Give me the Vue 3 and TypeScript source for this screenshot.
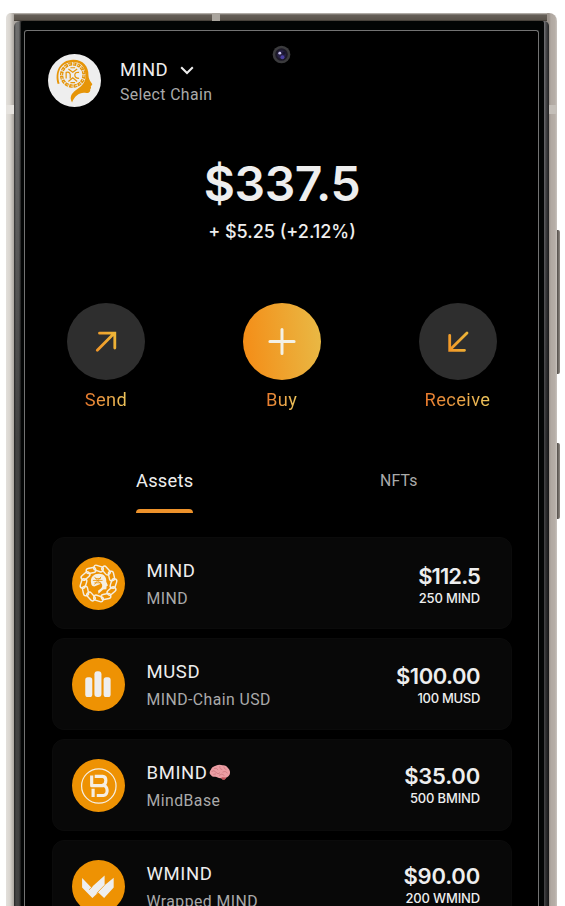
<script setup lang="ts">
interface Asset {
  icon: 'links' | 'bars' | 'base' | 'wrapped'
  symbol: string
  name: string
  value: string
  amount: string
  brain?: boolean
}

const assets: Asset[] = [
  { icon: 'links', symbol: 'MIND', name: 'MIND', value: '$112.5', amount: '250 MIND' },
  { icon: 'bars', symbol: 'MUSD', name: 'MIND-Chain USD', value: '$100.00', amount: '100 MUSD' },
  { icon: 'base', symbol: 'BMIND', name: 'MindBase', value: '$35.00', amount: '500 BMIND', brain: true },
  { icon: 'wrapped', symbol: 'WMIND', name: 'Wrapped MIND', value: '$90.00', amount: '200 WMIND' },
]

const links: number[] = Array.from({ length: 12 }, (_, i) => i * 30)
</script>

<template>
  <div class="stage">
    <div class="phone">
      <i class="antenna antenna-top"></i>
      <i class="antenna antenna-left"></i>
      <i class="antenna antenna-right"></i>
      <i class="key key-volume"></i>
      <i class="key key-power"></i>
      <div class="rail">
        <div class="bezel">
          <main class="screen">
            <svg class="camera" viewBox="0 0 20 20">
              <circle cx="10" cy="10" r="9.3" fill="#3b3b3d" />
              <circle cx="10" cy="10" r="6.6" fill="#1c1927" />
              <circle cx="10" cy="10" r="4.6" fill="#272145" />
              <circle cx="12.5" cy="8.5" r="1.7" fill="#17132e" />
              <circle cx="11" cy="13" r="2.1" fill="#4a3fa0" />
              <circle cx="8.2" cy="8.6" r="1.5" fill="#c9c3ee" />
            </svg>

            <header class="account">
              <svg class="avatar" viewBox="0 0 52 52">
                <circle cx="26" cy="26" r="26" fill="#eee" />
                <path d="M9.5 29.5C6 18 11.5 6 24.5 5.7C34 5.4 40 12 39.7 21C39.7 24 41.5 27 43.4 29.4C43.7 30.2 42.5 31 42 31.4L42.3 33.4L41.4 34.5C41.8 38.5 38.5 38.4 35.3 38.1C29.8 38.2 26 42 23.6 47.5C20.7 42.5 23 38.6 27.5 35.3C34.2 31.2 37.4 27.3 36.7 19.7C36 11 30.4 7.3 23.7 8C12.2 8.3 8.1 18 11.4 29Z" fill="#e69508" />
                <circle cx="24.3" cy="20.6" r="11" fill="none" stroke="#e69508" stroke-width="3.2" stroke-dasharray="3.5 .8" />
                <circle cx="24.3" cy="20.6" r="11" fill="none" stroke="#eee" stroke-width=".8" stroke-dasharray="2 2.3" />
                <g fill="none" stroke="#e69508" stroke-width="1.2">
                  <path d="M17.8 24V18Q21 17 21.8 20V24M30.5 18Q26.3 17.5 26.3 20.7T30.5 24M20 14.7L24.3 18L28.6 14.7M20 27L24.3 23.4L28.6 27M22 13.5H26.6M22 28H26.6" />
                </g>
              </svg>
              <div class="chain">
                <div class="chain-name">
                  <span>MIND</span>
                  <svg class="chevron" viewBox="0 0 14 9"><path d="M1.2 1.3L7 7L12.8 1.3" fill="none" stroke="#eee" stroke-width="2" /></svg>
                </div>
                <div class="chain-hint">Select Chain</div>
              </div>
            </header>

            <section class="balance">
              <div class="total">$337.5</div>
              <div class="change">+ $5.25 (+2.12%)</div>
            </section>

            <nav class="actions">
              <div class="action">
                <svg class="action-icon" viewBox="0 0 78 77">
                  <defs><linearGradient id="stroke-fill" gradientUnits="userSpaceOnUse" x1="28" y1="40" x2="50" y2="34"><stop stop-color="#f29727" /><stop offset="1" stop-color="#edb638" /></linearGradient></defs>
                  <ellipse cx="39" cy="38.5" rx="39" ry="38.5" fill="#2e2e2e" />
                  <path d="M30.3 47.2L47.2 30.3M32.5 30.2H47.8V45" fill="none" stroke="url(#stroke-fill)" stroke-width="2.8" stroke-linecap="round" />
                </svg>
                <span class="action-label">Send</span>
              </div>
              <div class="action">
                <svg class="action-icon" viewBox="0 0 78 77">
                  <defs><linearGradient id="buy-fill" x1="0" y1=".55" x2="1" y2=".45"><stop stop-color="#f48d17" /><stop offset="1" stop-color="#e9b844" /></linearGradient></defs>
                  <ellipse cx="39" cy="38.5" rx="39" ry="38.5" fill="url(#buy-fill)" />
                  <path d="M39 26.4V50.6M26.9 38.5H51.1" stroke="#f3f1e6" stroke-width="3" stroke-linecap="round" />
                </svg>
                <span class="action-label">Buy</span>
              </div>
              <div class="action">
                <svg class="action-icon" viewBox="0 0 78 77">
                  <ellipse cx="39" cy="38.5" rx="39" ry="38.5" fill="#2e2e2e" />
                  <path d="M48 29.9L31 46.8M30.7 32.5V47.3H45.5" fill="none" stroke="url(#stroke-fill)" stroke-width="2.8" stroke-linecap="round" />
                </svg>
                <span class="action-label">Receive</span>
              </div>
            </nav>

            <div class="tabs">
              <div class="tab active">Assets</div>
              <div class="tab">NFTs</div>
            </div>

            <section class="assets">
              <article v-for="asset in assets" :key="asset.symbol" class="card" :class="`card-${asset.icon}`">
                <svg class="token" viewBox="0 0 52 52">
                  <circle cx="26" cy="26" r="26" fill="#ee9203" />
                  <g v-if="asset.icon === 'links'">
                    <g fill="none" stroke="#f5efe2" stroke-width="1.4">
                      <rect v-for="angle in links" :key="angle" x="21.3" y="8.8" width="9.4" height="5" rx="2.2" :transform="`rotate(${angle} 26 26) rotate(18 26 11.3)`" />
                    </g>
                    <path d="M18.8 26C17.5 19.5 21.5 16.3 26.5 16.4C31.4 16.5 34 19.5 33.6 24.3L35.3 28L34 28.7L33.7 31.7L30.6 32L26 36L25.5 33C29.2 31 30.5 29 29 26L22.5 28.8C20.5 29 19 28 18.8 26Z" fill="#f5efe2" />
                    <path d="M20.5 23H30M22 19.5L29 27M28.5 19.5L22 27M22.8 21.2H28.3M22 25.3H28.5" stroke="#ee9203" stroke-width=".8" />
                  </g>
                  <g v-else-if="asset.icon === 'bars'" fill="#eee">
                    <rect x="13" y="19" width="6.9" height="19.3" rx="2.5" />
                    <rect x="22" y="13" width="6.9" height="25.3" rx="2.9" />
                    <rect x="31" y="19" width="6.9" height="19.3" rx="2.5" />
                  </g>
                  <g v-else-if="asset.icon === 'base'" fill="none" stroke="#f5eee2">
                    <circle cx="26.3" cy="26.5" r="16.9" stroke-width="1.2" />
                    <path d="M19.3 16.2V26.2H31M22.3 17H30.1C34.2 17.3 34.3 24.7 30 25.8C35.5 26 36 35 31 35.8H24.3M20.7 29.3V37.3" stroke-width="3.1" stroke-linejoin="round" />
                  </g>
                  <g v-else>
                    <path fill="#eee" d="M9.9 17.7L18.9 27L32 15.3V24.7L40.9 17.4V27L31.5 37.2L25.8 31.8L20 37.2L9.9 27Z" />
                    <path d="M16.8 29.2L20.2 26M32 24.7L24.2 32.7" stroke="#ee9203" stroke-width=".7" />
                  </g>
                </svg>
                <div class="identity">
                  <div class="symbol">
                    <span>{{ asset.symbol }}</span>
                    <svg v-if="asset.brain" class="brain" viewBox="0 0 22 17">
                      <path d="M2 11C0 10 .5 7 2 5.5C3 2.5 6 2.5 7.2 1.6C9 .5 12 .7 13.4 1.3C16 1 18 2.3 19 4C21 5.5 21.6 8.8 20.6 10.7C19.5 13 17.5 13 16.8 14C16 16 13 16 12.4 14.2C9.5 14.7 8 12.7 6 12.8C4 12.8 2.7 12.5 2 11Z" fill="#ec9ea4" />
                      <path d="M12.6 13.2L17.2 13.4C16.5 16 13.4 16.5 12.6 14.3Z" fill="#c0535a" />
                      <path d="M2.6 7.5Q5 5.5 7 8.3T11 8.7M5 4.5Q8 3.2 9 6.2M11 2Q10 5 13.3 5.6M14.8 2.6Q14.8 5 17.5 5.7M13.5 8.2Q17 6.4 18.4 9.4M10 11.4Q13 8.7 15.4 11.5M4.3 10.4L7 9.9" fill="none" stroke="#c8727a" stroke-width=".7" />
                    </svg>
                  </div>
                  <div class="name">{{ asset.name }}</div>
                </div>
                <div class="worth">
                  <div class="value">{{ asset.value }}</div>
                  <div class="amount">{{ asset.amount }}</div>
                </div>
              </article>
            </section>
          </main>
        </div>
      </div>
    </div>
  </div>
</template>

<style>
body { margin: 0; background: #fff; }
</style>

<style scoped>
* { box-sizing: border-box; }
svg { display: block; flex: none; }
.stage { width: 565px; height: 906px; padding: 13px 8px 0 6px; overflow: hidden; background: #fff; font-family: Roboto, sans-serif; }
.phone { position: relative; height: 893px; padding: 8px 8px 0; border-radius: 5px 8px 0 0; background: linear-gradient(#c9c5c0, #655f58 2px, #5a534b 7px, #37322d 8px) 8px 0 / 533px 8px no-repeat, linear-gradient(90deg, #e3e0dc 0, #d8d4ce 4px, #aaa59f 8px, #9c948d 543px, #b0a8a1 545px, #b6aea7 549px, #c8c3be 551px); }
.antenna { position: absolute; background: #aaa59e; }
.antenna-top { left: 206px; top: 0; width: 8px; height: 8px; }
.antenna-left { left: 0; top: 92px; width: 8px; height: 9px; background: #e6e3df; }
.antenna-right { right: 0; top: 92px; width: 8px; height: 9px; background: #c4bfb9; }
.key { position: absolute; left: 551px; width: 3px; border-radius: 0 2px 2px 0; background: linear-gradient(90deg, #504b46, #918b85); }
.key-volume { top: 217px; height: 144px; }
.key-power { top: 430px; height: 76px; }
.rail { height: 885px; padding: 0 5px 0 7px; border-radius: 6px 5px 0 0; background: linear-gradient(rgba(0, 0, 0, 0), rgba(0, 0, 0, .1) 130px, rgba(0, 0, 0, .4) 420px), linear-gradient(90deg, #3b3b3b 0, #727272 2px, #6c6c6c 5px, #222 7px, #171717 528px, #77777a 530px, #4b4b4e 532px, #242424 535px); }
.bezel { height: 885px; padding: 9px 5px 0 3px; border-radius: 2px 2px 0 0; background: #030505; }
.screen { position: relative; height: 876px; padding: 23px 26px 0 27px; border: solid #737373; border-width: 1px 1px 0; border-radius: 3px 3px 0 0; background: #000; overflow: hidden; }
.camera { position: absolute; left: 247px; top: 14px; width: 19px; height: 19px; }
.account { display: flex; margin-left: -4.5px; height: 53px; }
.avatar { width: 53px; height: 53px; }
.chain { margin-left: 19.5px; padding-top: 5px; }
.chain-name { display: flex; align-items: center; height: 22px; color: #eee; font-size: 18.5px; letter-spacing: .35px; line-height: 22px; }
.chevron { width: 14px; height: 9px; margin-left: 12px; }
.chain-hint { margin-top: 4px; height: 19px; color: #aaa; font-size: 15.8px; letter-spacing: .4px; line-height: 19px; white-space: nowrap; }
.balance { height: 196px; padding-top: 47px; color: #eee; font-family: Inter, sans-serif; text-align: center; }
.total { height: 60px; font-size: 48px; font-weight: 600; letter-spacing: -.4px; line-height: 60px; }
.change { height: 24px; margin-top: 6px; font-size: 18px; font-weight: 500; letter-spacing: 0; line-height: 24px; }
.actions { display: flex; justify-content: space-between; height: 147px; padding: 0 15.5px 0 15px; }
.action { display: flex; flex-direction: column; align-items: center; width: 78px; }
.action-icon { width: 78px; height: 77px; }
.action-label { height: 22px; margin-top: 9px; background: linear-gradient(90deg, #e8792d, #edc65c); -webkit-background-clip: text; background-clip: text; color: transparent; font-size: 18.3px; letter-spacing: .4px; line-height: 22px; }
.tabs { display: flex; height: 87px; padding-top: 17px; }
.tab { height: 46px; margin-left: 187px; color: #aaa; font-size: 15.8px; letter-spacing: .2px; line-height: 27px; }
.active { display: flex; flex-direction: column; justify-content: space-between; width: 57px; margin-left: 84px; color: #eee; font-size: 18.3px; letter-spacing: .25px; }
.active::after { content: ""; height: 4px; border-radius: 4px 4px 0 0; background: #ed922b; }
.assets { display: flex; flex-direction: column; gap: 9px; }
.card { display: flex; align-items: center; flex: none; height: 92px; padding: 0 31px 0 20px; border: 1px solid #0b0b0b; border-radius: 12px; background: #080808; }
.token { width: 53px; height: 53px; margin-left: -1px; }
.identity { margin-left: 21.5px; padding-top: 1px; }
.symbol { display: flex; align-items: center; height: 24px; color: #eee; font-size: 18.5px; letter-spacing: .6px; line-height: 24px; }
.brain { width: 22px; height: 17px; margin-left: 1px; }
.name { height: 20px; margin-top: 6px; color: #aaa; font-size: 15.8px; letter-spacing: .45px; line-height: 20px; }
.worth { align-self: flex-start; margin-left: auto; padding-top: 25px; color: #eee; font-family: Inter, sans-serif; text-align: right; }
.value { height: 26px; font-size: 22px; font-weight: 600; letter-spacing: -.2px; line-height: 26px; }
.amount { height: 18px; font-size: 13px; font-weight: 500; letter-spacing: -.15px; line-height: 18px; }
.card-links .value { letter-spacing: -.9px; }
.card-bars .worth { padding-top: 24px; }
.card-bars .value { letter-spacing: -.5px; }
.card-bars .amount { letter-spacing: -.3px; }
.card-base .worth { padding-top: 23px; }
.card-wrapped .worth { padding-top: 22px; }
</style>
